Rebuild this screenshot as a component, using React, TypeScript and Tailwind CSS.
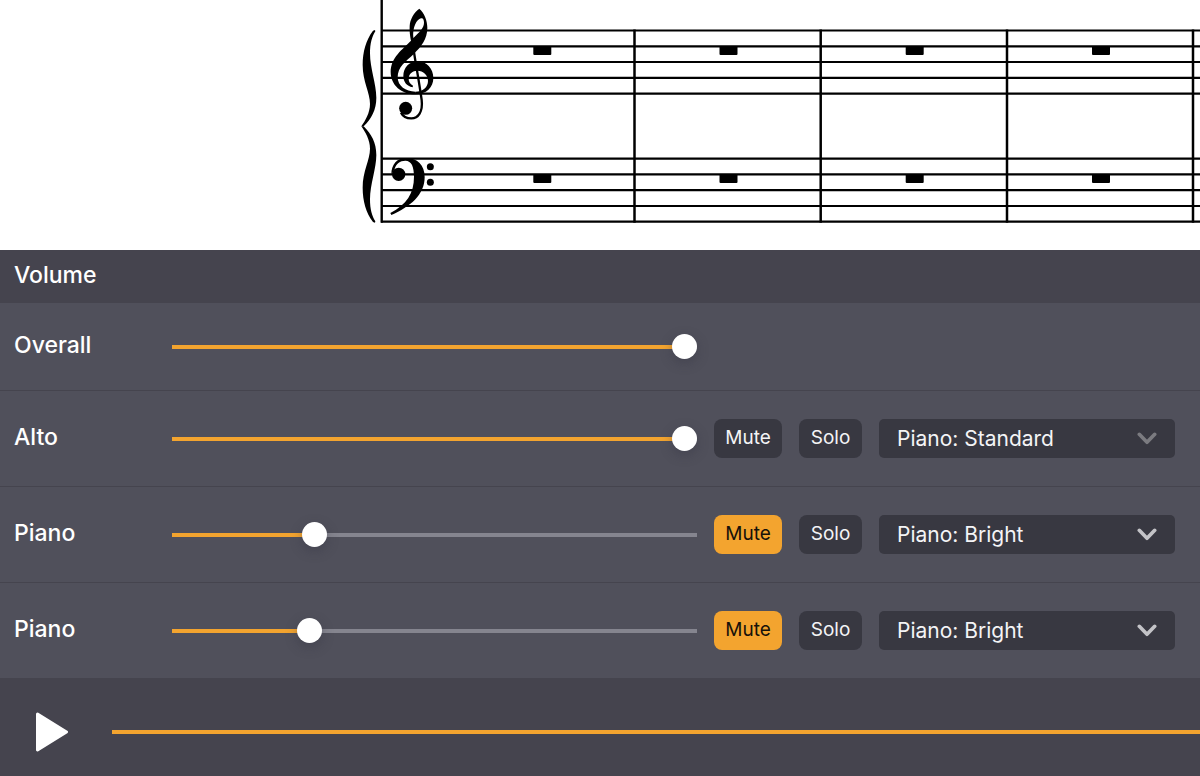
import { useState } from "react";

const STAVES = [
  [30.5, 46.3, 62, 77.9, 93.6],
  [158.7, 174.4, 190.2, 206, 221.7],
];
const BARLINES = [634.5, 820.7, 1007, 1193];
const RESTS = [542.3, 728.5, 914.7, 1101];

const BRACE_HALF =
  "M75 90 L69 92 C48 120 38 155 38 195 C38 245 60 278 60 312 C60 338 46 362 34 379 L41 379 C64 356 79 330 79 293 C79 252 60 205 60 160 C60 130 66 110 76 94 Z";

function Score() {
  return (
    <svg className="block h-[250px] w-full bg-white" role="img" aria-label="Sheet music">
      {STAVES.flat().map((y) => (
        <line key={y} x1="381" x2="100%" y1={y} y2={y} stroke="#000" strokeWidth="2.2" />
      ))}
      <line x1="381.7" x2="381.7" y1="0" y2="222.7" stroke="#000" strokeWidth="2.4" />
      {BARLINES.map((x) => (
        <line key={x} x1={x} x2={x} y1="29.5" y2="222.7" stroke="#000" strokeWidth="2.5" />
      ))}
      {RESTS.map((x) => (
        <g key={x}>
          <rect x={x - 9} y="46" width="18" height="9" rx="1" />
          <rect x={x - 9} y="174" width="18" height="9" rx="1" />
        </g>
      ))}
      <g transform="translate(350 0) scale(0.33333)">
        <path d={BRACE_HALF} />
        <path d={BRACE_HALF} transform="translate(0 758) scale(1 -1)" />
        <path
          fillRule="evenodd"
          d="M208 26 C223 38 232 62 232 84 C232 118 213 141 192 161 C167 185 143 200 143 232 C143 258 167 275 196 275 L196 283 C155 283 122 256 122 216 C122 172 158 148 183 122 C180 108 178 94 179 78 C180 58 192 37 208 26 Z M213 55 C200 58 187 82 190 114 C207 97 222 85 222 68 C222 60 219 53 213 55 Z"
        />
        <path d="M196 283 C229 283 250 262 250 234 C250 206 229 184 203 184 C177 184 160 204 160 228 C160 246 170 258 188 262 L189 257 C180 252 176 245 176 237 C176 221 188 212 202 212 C220 212 234 225 234 243 C234 262 218 275 196 275 Z" />
        <path
          d="M186 116 C192 165 206 235 215 300 C219 335 205 355 184 355 C168 355 158 348 153 338"
          fill="none"
          stroke="#000"
          strokeWidth="7"
        />
        <circle cx="167" cy="325" r="19.5" />
      </g>
      <g transform="translate(350 115) scale(0.33333)">
        <circle cx="146" cy="178" r="20" />
        <path d="M124 178 C124 149 140 129 168 129 C202 129 224 150 224 186 C224 240 180 275 124 300 L121 294 C170 268 192 235 192 185 C192 156 185 137 166 137 C150 137 138 146 133 164 Z" />
        <circle cx="241" cy="155" r="10.5" />
        <circle cx="241" cy="202" r="10.5" />
      </g>
    </svg>
  );
}

function VolumeSlider({ id, initial }: { id: string; initial: number }) {
  const [value, setValue] = useState(initial);
  const fill = `calc(12px + (100% - 25px) * ${value / 100})`;
  return (
    <input
      id={id}
      type="range"
      min={0}
      max={100}
      value={value}
      onChange={(e) => setValue(Number(e.target.value))}
      style={{
        backgroundImage: `linear-gradient(to right, #f3a42f ${fill}, #85858f ${fill})`,
      }}
      className="m-0 block h-1 w-full cursor-pointer appearance-none [&::-webkit-slider-runnable-track]:h-1 [&::-webkit-slider-thumb]:-mt-[11px] [&::-webkit-slider-thumb]:size-[25px] [&::-webkit-slider-thumb]:appearance-none [&::-webkit-slider-thumb]:rounded-full [&::-webkit-slider-thumb]:bg-white [&::-webkit-slider-thumb]:shadow-[0_4px_12px_rgba(50,50,65,0.4)]"
    />
  );
}

function ToggleButton({ label, initial = false }: { label: string; initial?: boolean }) {
  const [on, setOn] = useState(initial);
  return (
    <button
      type="button"
      aria-pressed={on}
      onClick={() => setOn(!on)}
      className={
        on
          ? "h-[39px] rounded-lg bg-[#f3a42f] text-[19px] text-[#17120a]"
          : "h-[39px] rounded-lg bg-[#383841] text-[19px] text-[#f4f4f6]"
      }
    >
      {label}
    </button>
  );
}

type Track = { id: string; name: string; volume: number; muted: boolean; sound: string; dim?: boolean };

const TRACKS: Track[] = [
  { id: "alto", name: "Alto", volume: 100, muted: false, sound: "Piano: Standard", dim: true },
  { id: "piano-1", name: "Piano", volume: 26, muted: true, sound: "Piano: Bright" },
  { id: "piano-2", name: "Piano", volume: 25, muted: true, sound: "Piano: Bright" },
];

const ROW =
  "grid grid-cols-[141px_minmax(0,1fr)_68px_63px_296px] items-center gap-x-[17px] border-b border-[#45444e] pr-[25px] pl-[14px]";
const LABEL = "pb-[3px] text-[23px] font-medium leading-7";

function TrackRow({ track }: { track: Track }) {
  return (
    <div className={`${ROW} h-24`}>
      <label htmlFor={track.id} className={LABEL}>
        {track.name}
      </label>
      <VolumeSlider id={track.id} initial={track.volume} />
      <ToggleButton label="Mute" initial={track.muted} />
      <ToggleButton label="Solo" />
      <div className="relative">
        <select
          aria-label={`${track.name} sound`}
          defaultValue={track.sound}
          className="block h-[39px] w-full appearance-none rounded-[5px] bg-[#383841] pr-12 pl-[18px] text-[21px] text-[#f4f4f6]"
        >
          <option>Piano: Standard</option>
          <option>Piano: Bright</option>
        </select>
        <svg
          viewBox="0 0 20 13"
          className={
            track.dim
              ? "pointer-events-none absolute top-[13px] right-[18px] h-[13px] w-5 text-[#7b7b80]"
              : "pointer-events-none absolute top-[13px] right-[18px] h-[13px] w-5 text-[#c3c3c7]"
          }
          aria-hidden="true"
        >
          <path
            d="M2.3 2.3 L10 10.3 L17.7 2.3"
            fill="none"
            stroke="currentColor"
            strokeWidth="3.6"
            strokeLinecap="round"
            strokeLinejoin="round"
          />
        </svg>
      </div>
    </div>
  );
}

export default function App() {
  return (
    <main className="min-h-screen bg-[#45444e] font-['Inter',sans-serif] text-white">
      <Score />
      <section className="bg-[#50505b]">
        <h2 className="flex h-[53px] items-center bg-[#45444e] pb-[2px] pl-[14px] text-[23px] font-medium">
          Volume
        </h2>
        <div className={`${ROW} h-[88px]`}>
          <label htmlFor="overall" className={LABEL}>
            Overall
          </label>
          <VolumeSlider id="overall" initial={100} />
        </div>
        {TRACKS.map((t) => (
          <TrackRow key={t.id} track={t} />
        ))}
      </section>
      <footer className="flex h-[97px] items-center overflow-hidden pt-[9px] pl-9">
        <button type="button" aria-label="Play" className="mr-11 shrink-0">
          <svg viewBox="0 0 32 40" className="block h-10 w-8" aria-hidden="true">
            <path
              d="M1.5 2 L30.5 20 L1.5 38 Z"
              fill="#fff"
              stroke="#fff"
              strokeWidth="3"
              strokeLinejoin="round"
            />
          </svg>
        </button>
        <input
          type="range"
          aria-label="Position"
          defaultValue={100}
          className="m-0 block h-1 min-w-0 flex-1 appearance-none bg-[#f3a42f] [&::-webkit-slider-thumb]:size-1 [&::-webkit-slider-thumb]:appearance-none [&::-webkit-slider-thumb]:opacity-0"
        />
      </footer>
    </main>
  );
}
